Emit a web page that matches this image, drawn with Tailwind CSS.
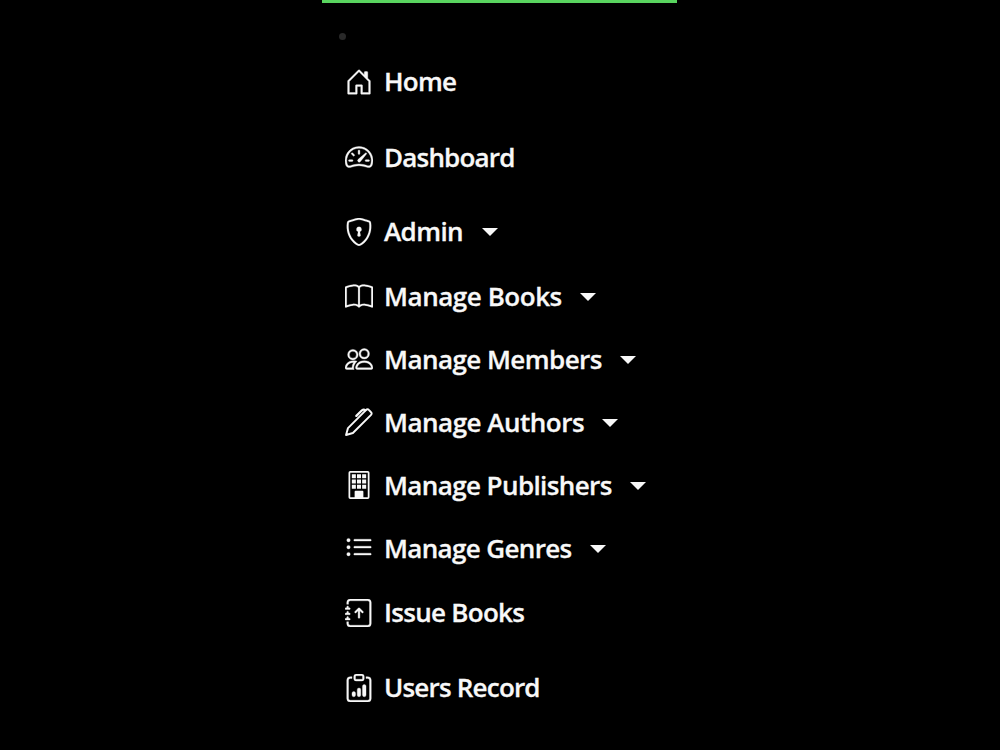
<!DOCTYPE html>
<html lang="en">
<head>
  <meta charset="UTF-8" />
  <meta name="viewport" content="width=device-width, initial-scale=1.0" />
  <title>Library Menu</title>
  <script src="https://cdn.jsdelivr.net/npm/@tailwindcss/browser@4"></script>
</head>
<body class="bg-black h-screen overflow-hidden text-[#f8f8f8] font-['Open_Sans',sans-serif]">
  <aside class="w-[355px] h-full ml-[322px] border-t-3 border-[#59d55f]">
    <div class="h-[41px] pt-[30px] pl-[17px]">
      <div class="size-[7px] rounded-full bg-[#292929]"></div>
    </div>

    <nav class="pl-[23px] text-[26px] leading-[36px] font-semibold whitespace-nowrap [-webkit-text-stroke:0.3px]">
      <a class="flex items-center h-[76px]">
        <svg class="size-7 mr-[11px] shrink-0" viewBox="0 0 16 16" fill="currentColor" stroke="currentColor" stroke-width=".2"><path d="M8.354 1.146a.5.5 0 0 0-.708 0l-6 6A.5.5 0 0 0 1.5 7.5v7a.5.5 0 0 0 .5.5h4.5a.5.5 0 0 0 .5-.5v-4h2v4a.5.5 0 0 0 .5.5H14a.5.5 0 0 0 .5-.5v-7a.5.5 0 0 0-.146-.354L13 5.793V2.5a.5.5 0 0 0-.5-.5h-1a.5.5 0 0 0-.5.5v1.293zM2.5 14V7.707l5.5-5.5 5.5 5.5V14H10v-4a.5.5 0 0 0-.5-.5h-3a.5.5 0 0 0-.5.5v4z"/></svg>
        <span class="pb-0.5 tracking-[-0.7px]">Home</span>
      </a>
      <a class="flex items-center h-[75px]">
        <svg class="size-7 mr-[11px] -mt-px shrink-0" viewBox="0 0 16 16" fill="currentColor" stroke="currentColor" stroke-width=".2"><path d="M8 4a.5.5 0 0 1 .5.5V6a.5.5 0 0 1-1 0V4.5A.5.5 0 0 1 8 4M3.732 5.732a.5.5 0 0 1 .707 0l.915.914a.5.5 0 1 1-.708.708l-.914-.915a.5.5 0 0 1 0-.707M2 10a.5.5 0 0 1 .5-.5h1.586a.5.5 0 0 1 0 1H2.5A.5.5 0 0 1 2 10m9.5 0a.5.5 0 0 1 .5-.5h1.5a.5.5 0 0 1 0 1H12a.5.5 0 0 1-.5-.5m.754-4.246a.39.39 0 0 0-.527-.02L7.547 9.31a.91.91 0 1 0 1.302 1.258l3.434-4.297a.39.39 0 0 0-.029-.518z"/><path fill-rule="evenodd" d="M0 10a8 8 0 1 1 15.547 2.661c-.442 1.253-1.845 1.602-2.932 1.25C11.309 13.488 9.475 13 8 13c-1.474 0-3.31.488-4.615.911-1.087.352-2.49.003-2.932-1.25A8 8 0 0 1 0 10m8-7a7 7 0 0 0-6.603 9.329c.203.575.923.876 1.68.63C4.397 12.533 6.358 12 8 12s3.604.532 4.923.96c.757.245 1.477-.056 1.68-.631A7 7 0 0 0 8 3"/></svg>
        <span class="pb-0.5 tracking-[-0.8px]">Dashboard</span>
      </a>
      <a class="flex items-center h-[74px]">
        <svg class="size-7 mr-[11px] -mt-px shrink-0" viewBox="0 0 16 16" fill="currentColor" stroke="currentColor" stroke-width=".1"><path d="M5.338 1.59a61 61 0 0 0-2.837.856.48.48 0 0 0-.328.39c-.554 4.157.726 7.19 2.253 9.188a10.7 10.7 0 0 0 2.287 2.233c.346.244.652.42.893.533q.18.085.293.118a1 1 0 0 0 .101.025 1 1 0 0 0 .1-.025q.114-.034.294-.118c.24-.113.547-.29.893-.533a10.7 10.7 0 0 0 2.287-2.233c1.527-1.997 2.807-5.031 2.253-9.188a.48.48 0 0 0-.328-.39c-.651-.213-1.75-.56-2.837-.855C9.552 1.29 8.531 1.067 8 1.067c-.53 0-1.552.223-2.662.524zM5.072.56C6.157.265 7.31 0 8 0s1.843.265 2.928.56c1.11.3 2.229.655 2.887.87a1.54 1.54 0 0 1 1.044 1.262c.596 4.477-.787 7.795-2.465 9.99a11.8 11.8 0 0 1-2.517 2.453 7 7 0 0 1-1.048.625c-.28.132-.581.24-.829.24s-.548-.108-.829-.24a7 7 0 0 1-1.048-.625 11.8 11.8 0 0 1-2.517-2.453C1.928 10.487.545 7.169 1.141 2.692A1.54 1.54 0 0 1 2.185 1.43 63 63 0 0 1 5.072.56"/><path d="M9.5 6.5a1.5 1.5 0 0 1-1 1.415l.385 1.99a.5.5 0 0 1-.491.595h-.788a.5.5 0 0 1-.49-.595l.384-1.99a1.5 1.5 0 1 1 2-1.415"/></svg>
        <span class="pb-0.5 tracking-[-0.6px]">Admin</span>
        <span class="ml-[19px] border-x-8 border-x-transparent border-t-8 border-t-[#f8f8f8]"></span>
      </a>
      <a class="flex items-center h-[56px]">
        <svg class="size-7 mr-[11px] -mt-px shrink-0" viewBox="0 0 16 16" fill="currentColor" stroke="currentColor" stroke-width=".1"><path d="M1 2.828c.885-.37 2.154-.769 3.388-.893 1.33-.134 2.458.063 3.112.752v9.746c-.935-.53-2.12-.603-3.213-.493-1.18.12-2.37.461-3.287.811zm7.5-.141c.654-.689 1.782-.886 3.112-.752 1.234.124 2.503.523 3.388.893v9.923c-.918-.35-2.107-.692-3.287-.81-1.094-.111-2.278-.039-3.213.492zM8 1.783C7.015.936 5.587.81 4.287.94c-1.514.153-3.042.672-3.994 1.105A.5.5 0 0 0 0 2.5v11a.5.5 0 0 0 .707.455c.882-.4 2.303-.881 3.68-1.02 1.409-.142 2.59.087 3.223.877a.5.5 0 0 0 .78 0c.633-.79 1.814-1.019 3.222-.877 1.378.139 2.8.62 3.681 1.02A.5.5 0 0 0 16 13.5v-11a.5.5 0 0 0-.293-.455c-.952-.433-2.48-.952-3.994-1.105C10.413.809 8.985.936 8 1.783"/></svg>
        <span class="pb-0.5 tracking-[-0.45px]">Manage Books</span>
        <span class="ml-[18px] border-x-8 border-x-transparent border-t-8 border-t-[#f8f8f8]"></span>
      </a>
      <a class="flex items-center h-[63px] mt-[3px]">
        <svg class="size-7 mr-[11px] -mt-0.5 shrink-0" viewBox="0 0 16 16" fill="currentColor" stroke="currentColor" stroke-width=".2"><path d="M15 14s1 0 1-1-1-4-5-4-5 3-5 4 1 1 1 1zm-7.978-1L7 12.996c.001-.264.167-1.03.76-1.72C8.312 10.629 9.282 10 11 10c1.717 0 2.687.63 3.24 1.276.593.69.758 1.457.76 1.72l-.008.002-.014.002zM11 7a2 2 0 1 0 0-4 2 2 0 0 0 0 4m3-2a3 3 0 1 1-6 0 3 3 0 0 1 6 0M6.936 9.28a6 6 0 0 0-1.23-.247A7 7 0 0 0 5 9c-4 0-5 3-5 4q0 1 1 1h4.216A2.24 2.24 0 0 1 5 13c0-1.01.377-2.042 1.09-2.904.243-.294.526-.569.846-.816M4.92 10A5.5 5.5 0 0 0 4 13H1c0-.26.164-1.03.76-1.724.545-.636 1.492-1.256 3.16-1.275ZM1.5 5.5a3 3 0 1 1 6 0 3 3 0 0 1-6 0m3-2a2 2 0 1 0 0 4 2 2 0 0 0 0-4"/></svg>
        <span class="pb-0.5 tracking-[-0.55px]">Manage Members</span>
        <span class="ml-[18px] border-x-8 border-x-transparent border-t-8 border-t-[#f8f8f8]"></span>
      </a>
      <a class="flex items-center h-[63px]">
        <svg class="size-7 mr-[11px] -mt-0.5 shrink-0" viewBox="0 0 16 16" fill="none" stroke="currentColor" stroke-width="1.1" stroke-linejoin="round" stroke-linecap="round"><path d="M.6 15.4l1.1-3.9L12.1 1.1a1 1 0 0 1 1.5 0l1.300 1.300a1 1 0 0 1 0 1.500L4.500 14.300z"/><path d="M6.500 4.500l3.200-3.200q1-.8 2 0" stroke-width="1.300"/></svg>
        <span class="pb-0.5 tracking-[-0.5px]">Manage Authors</span>
        <span class="ml-[18px] border-x-8 border-x-transparent border-t-8 border-t-[#f8f8f8]"></span>
      </a>
      <a class="flex items-center h-[63px]">
        <svg class="size-7 mr-[11px] -mt-px shrink-0" viewBox="0 0 16 16" fill="currentColor"><path fill-rule="evenodd" d="M2 1a1 1 0 0 1 1-1h10a1 1 0 0 1 1 1v14a1 1 0 0 1-1 1H3a1 1 0 0 1-1-1zm11 0H3v14h2.500v-3.200a.5.5 0 0 1 .5-.5h4a.5.5 0 0 1 .5.5V15H13z"/><path d="M3.900 1.900h2.300v2.300H3.900zM6.850 1.900h2.300v2.300h-2.300zM9.800 1.900h2.300v2.300H9.800zM3.900 4.900h2.300v2.300H3.900zM6.850 4.900h2.300v2.300h-2.300zM9.800 4.900h2.300v2.300H9.800zM3.900 7.900h2.300v2.300H3.900zM6.850 7.900h2.300v2.300h-2.300zM9.800 7.900h2.300v2.300H9.800z"/></svg>
        <span class="pb-0.5 tracking-[-0.6px]">Manage Publishers</span>
        <span class="ml-[18px] border-x-8 border-x-transparent border-t-8 border-t-[#f8f8f8]"></span>
      </a>
      <a class="flex items-center h-[63px]">
        <svg class="size-7 mr-[11px] -mt-px shrink-0" viewBox="0 0 16 16" fill="currentColor" stroke="currentColor" stroke-width=".2"><path fill-rule="evenodd" d="M5 11.500a.5.5 0 0 1 .5-.5h9a.5.5 0 0 1 0 1h-9a.5.5 0 0 1-.5-.5m0-4a.5.5 0 0 1 .5-.5h9a.5.5 0 0 1 0 1h-9a.5.5 0 0 1-.5-.5m0-4a.5.5 0 0 1 .5-.5h9a.5.5 0 0 1 0 1h-9a.5.5 0 0 1-.5-.5m-3 1a1 1 0 1 0 0-2 1 1 0 0 0 0 2m0 4a1 1 0 1 0 0-2 1 1 0 0 0 0 2m0 4a1 1 0 1 0 0-2 1 1 0 0 0 0 2"/></svg>
        <span class="pb-0.5 tracking-[-0.65px]">Manage Genres</span>
        <span class="ml-[18px] border-x-8 border-x-transparent border-t-8 border-t-[#f8f8f8]"></span>
      </a>
      <a class="flex items-center h-[63px] mt-px">
        <svg class="size-7 mr-[11px] shrink-0" viewBox="0 0 16 16" fill="currentColor" stroke="currentColor" stroke-width=".2"><path fill-rule="evenodd" d="M8 11a.5.5 0 0 0 .5-.5V6.707l1.146 1.147a.5.5 0 0 0 .708-.708l-2-2a.5.5 0 0 0-.708 0l-2 2a.5.5 0 1 0 .708.708L7.500 6.707V10.500a.5.5 0 0 0 .5.5"/><path d="M3 0h10a2 2 0 0 1 2 2v12a2 2 0 0 1-2 2H3a2 2 0 0 1-2-2v-1h1v1a1 1 0 0 0 1 1h10a1 1 0 0 0 1-1V2a1 1 0 0 0-1-1H3a1 1 0 0 0-1 1v1H1V2a2 2 0 0 1 2-2"/><path d="M1 5v-.5a.5.5 0 0 1 1 0V5h.5a.5.5 0 0 1 0 1h-2a.5.5 0 0 1 0-1zm0 3v-.5a.5.5 0 0 1 1 0V8h.5a.5.5 0 0 1 0 1h-2a.5.5 0 0 1 0-1zm0 3v-.5a.5.5 0 0 1 1 0v.5h.5a.5.5 0 0 1 0 1h-2a.5.5 0 0 1 0-1z"/></svg>
        <span class="pb-0.5 tracking-[-0.7px]">Issue Books</span>
      </a>
      <a class="flex items-center h-[88px]">
        <svg class="size-7 mr-[11px] -mt-px shrink-0" viewBox="0 0 16 16" fill="currentColor" stroke="currentColor" stroke-width=".2"><path d="M4 11a1 1 0 1 1 2 0v1a1 1 0 1 1-2 0zm6-4a1 1 0 1 1 2 0v5a1 1 0 1 1-2 0zM7 9a1 1 0 0 1 2 0v3a1 1 0 1 1-2 0z"/><path d="M4 1.500H3a2 2 0 0 0-2 2V14a2 2 0 0 0 2 2h10a2 2 0 0 0 2-2V3.500a2 2 0 0 0-2-2h-1v1h1a1 1 0 0 1 1 1V14a1 1 0 0 1-1 1H3a1 1 0 0 1-1-1V3.500a1 1 0 0 1 1-1h1z"/><path d="M9.500 1a.5.5 0 0 1 .5.5v1a.5.5 0 0 1-.5.5h-3a.5.5 0 0 1-.5-.5v-1a.5.5 0 0 1 .5-.5zm-3-1A1.500 1.500 0 0 0 5 1.500v1A1.500 1.500 0 0 0 6.500 4h3A1.500 1.500 0 0 0 11 2.500v-1A1.500 1.500 0 0 0 9.500 0z"/></svg>
        <span class="pb-0.5 tracking-[-0.8px]">Users Record</span>
      </a>
    </nav>
  </aside>
</body>
</html>
